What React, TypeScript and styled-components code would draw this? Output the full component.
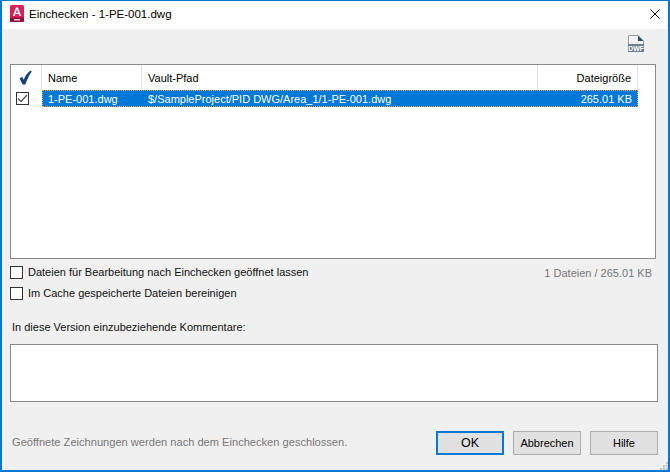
import { createGlobalStyle, styled } from 'styled-components';

const GlobalStyle = createGlobalStyle`
  html, body {
    margin: 0;
    padding: 0;
    background: #f0f0f0;
  }
  * {
    box-sizing: border-box;
  }
`;

const Window = styled.div`
  position: relative;
  width: 670px;
  height: 472px;
  display: flex;
  flex-direction: column;
  border: 2px solid #0078d7;
  border-top-width: 1px;
  background: #f0f0f0;
  font-family: 'Liberation Sans', Arial, sans-serif;
  font-size: 11px;
  color: #111;
  overflow: hidden;
`;

const TitleBar = styled.div`
  height: 28px;
  flex: none;
  display: flex;
  align-items: center;
  padding: 0 8px 3px 8px;
  background: #fff;
`;

const TitleText = styled.span`
  margin-left: 5px;
  flex: 1;
  font-size: 11.5px;
  color: #000;
`;

const Body = styled.div`
  flex: 1;
  display: flex;
  flex-direction: column;
  padding: 0 10px 0 8px;
`;

const Toolbar = styled.div`
  height: 35px;
  flex: none;
  display: flex;
  justify-content: flex-end;
  padding: 6px 14px 0 0;
`;

const ListBox = styled.div`
  height: 195px;
  flex: none;
  margin-right: 2px;
  background: #fff;
  border: 1px solid #8a8a8a;
`;

const HeaderRow = styled.div`
  height: 25px;
  display: grid;
  grid-template-columns: 31px 100px 396px 100px;
`;

const HeaderCell = styled.div<{ $right?: boolean }>`
  display: flex;
  align-items: center;
  justify-content: ${(p) => (p.$right ? 'flex-end' : 'flex-start')};
  padding: ${(p) => (p.$right ? '0 6px 0 0' : '0 0 0 6px')};
  border-right: 1px solid #e3e3e3;
  color: #000;
`;

const CheckHeader = styled(HeaderCell)`
  justify-content: center;
  padding: 0 2px 0 0;
`;

const DataRow = styled.div`
  height: 17px;
  display: grid;
  grid-template-columns: 31px 596px;
`;

const CheckCell = styled.div`
  display: flex;
  align-items: center;
  padding: 0 0 0 5px;
`;

const SelectedRow = styled.div`
  display: grid;
  grid-template-columns: 100px 396px 100px;
  align-items: center;
  background: #0078d7;
  color: #fff;
  outline: 1px dotted #e8a15a;
  outline-offset: -1px;
`;

const RowCell = styled.div<{ $right?: boolean }>`
  padding: ${(p) => (p.$right ? '0 6px 0 0' : '0 0 0 6px')};
  text-align: ${(p) => (p.$right ? 'right' : 'left')};
`;

const Box = styled.span`
  width: 13px;
  height: 13px;
  flex: none;
  display: flex;
  align-items: center;
  justify-content: center;
  background: #fff;
  border: 1px solid #333;
`;

const OptionsRow = styled.div`
  display: flex;
  justify-content: space-between;
  padding-top: 6px;
`;

const Options = styled.div`
  display: flex;
  flex-direction: column;
  gap: 7px;
`;

const OptionLabel = styled.label`
  height: 14px;
  display: flex;
  align-items: center;
  gap: 5px;
`;

const Summary = styled.span`
  padding: 2px 6px 0 0;
  color: #777;
`;

const CommentLabel = styled.div`
  margin: 20px 0 0 2px;
  height: 14px;
  line-height: 14px;
`;

const CommentBox = styled.div`
  height: 58px;
  margin-top: 10px;
  background: #fff;
  border: 1px solid #8a8a8a;
`;

const Footer = styled.div`
  display: flex;
  align-items: center;
  margin-top: 29px;
`;

const Hint = styled.span`
  flex: 1;
  padding: 0 0 3px 2px;
  font-size: 11.1px;
  color: #777;
`;

const DialogButton = styled.button<{ $primary?: boolean; $width: number }>`
  width: ${(p) => p.$width}px;
  height: 24px;
  margin-left: ${(p) => (p.$primary ? '0' : '9px')};
  padding: 0;
  background: #e1e1e1;
  border: ${(p) => (p.$primary ? '2px solid #0078d7' : '1px solid #adadad')};
  font: inherit;
  font-size: ${(p) => (p.$primary ? '12.5px' : '11px')};
  color: #000;
`;

const Grip = styled.svg`
  position: absolute;
  right: 0;
  bottom: 0;
`;

function AcadIcon() {
  return (
    <svg width="14" height="17" viewBox="0 0 14 17">
      <rect x="0" y="0" width="14" height="17" rx="1.5" fill="#dc1f55" />
      <path d="M0 12.5h14V15.5a1.5 1.5 0 0 1-1.5 1.5h-11A1.5 1.5 0 0 1 0 15.5z" fill="#8c1238" />
      <path d="M2.8 11 6 2.5h2L11.2 11H9.4l-.7-1.900H5.300L4.600 11zM5.800 7.700h2.400L7 4.600z" fill="#fff" />
      <rect x="4" y="14" width="6" height="1.5" fill="#f3c6d3" />
    </svg>
  );
}

function CloseIcon() {
  return (
    <svg width="10" height="10" viewBox="0 0 10 10">
      <path d="M.5.5l9 9M9.5.5l-9 9" stroke="#111" strokeWidth="1" fill="none" />
    </svg>
  );
}

function DwfIcon() {
  return (
    <svg width="16" height="17" viewBox="0 0 16 17">
      <path d="M.5.5H10L15.5 6v5H.5z" fill="#f4f4f4" stroke="#9a9a9a" />
      <path d="M10 .5V6h5.5z" fill="#2f4a78" />
      <rect x="0" y="9" width="16" height="8" fill="#6f7f93" />
      <text x="8" y="15.5" textAnchor="middle" fontSize="6.8" fontWeight="700" fontFamily="'Liberation Sans', sans-serif" fill="#fff">DWF</text>
    </svg>
  );
}

function BlueCheck() {
  return (
    <svg width="13" height="15" viewBox="0 0 13 15">
      <path d="M.6 8.6 3.2 6.8l1.500 2.900C6.200 6 8.400 2.800 11.500.5L12.800 1.500C10.200 5 8 9.600 6.300 14.500H3.600z" fill="#14407a" />
    </svg>
  );
}

function RowCheck() {
  return (
    <svg width="11" height="9" viewBox="0 0 11 9">
      <path d="M1 4.5 4 7.5 10 1" stroke="#555" strokeWidth="1.3" fill="none" />
    </svg>
  );
}

export default function App() {
  return (
    <>
      <GlobalStyle />
      <Window>
        <TitleBar>
          <AcadIcon />
          <TitleText>Einchecken - 1-PE-001.dwg</TitleText>
          <CloseIcon />
        </TitleBar>
        <Body>
          <Toolbar>
            <DwfIcon />
          </Toolbar>
          <ListBox>
            <HeaderRow>
              <CheckHeader>
                <BlueCheck />
              </CheckHeader>
              <HeaderCell>Name</HeaderCell>
              <HeaderCell>Vault-Pfad</HeaderCell>
              <HeaderCell $right>Dateigröße</HeaderCell>
            </HeaderRow>
            <DataRow>
              <CheckCell>
                <Box>
                  <RowCheck />
                </Box>
              </CheckCell>
              <SelectedRow>
                <RowCell>1-PE-001.dwg</RowCell>
                <RowCell>$/SampleProject/PID DWG/Area_1/1-PE-001.dwg</RowCell>
                <RowCell $right>265.01 KB</RowCell>
              </SelectedRow>
            </DataRow>
          </ListBox>
          <OptionsRow>
            <Options>
              <OptionLabel>
                <Box />
                Dateien für Bearbeitung nach Einchecken geöffnet lassen
              </OptionLabel>
              <OptionLabel>
                <Box />
                Im Cache gespeicherte Dateien bereinigen
              </OptionLabel>
            </Options>
            <Summary>1 Dateien / 265.01 KB</Summary>
          </OptionsRow>
          <CommentLabel>In diese Version einzubeziehende Kommentare:</CommentLabel>
          <CommentBox />
          <Footer>
            <Hint>Geöffnete Zeichnungen werden nach dem Einchecken geschlossen.</Hint>
            <DialogButton $primary $width={68}>OK</DialogButton>
            <DialogButton $width={68}>Abbrechen</DialogButton>
            <DialogButton $width={68}>Hilfe</DialogButton>
          </Footer>
        </Body>
        <Grip width="8" height="8" viewBox="0 0 8 8">
          <path d="M6 0h2v2H6zM3 3h2v2H3zM6 3h2v2H6zM0 6h2v2H0zM3 6h2v2H3zM6 6h2v2H6z" fill="#c4c4c4" />
        </Grip>
      </Window>
    </>
  );
}
